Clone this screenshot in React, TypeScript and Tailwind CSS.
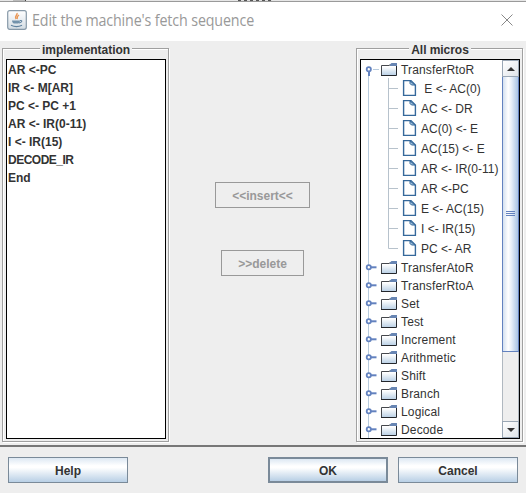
import React from "react";

const steps = ["AR <-PC", "IR <- M[AR]", "PC <- PC +1", "AR <- IR(0-11)", "I <- IR(15)", "DECODE_IR", "End"];
const transfers = [" E <- AC(0)", "AC <- DR", "AC(0) <- E", "AC(15) <- E", "AR <- IR(0-11)", "AR <-PC", "E <- AC(15)", "I <- IR(15)", "PC <- AR"];
const folders = ["TransferAtoR", "TransferRtoA", "Set", "Test", "Increment", "Arithmetic", "Shift", "Branch", "Logical", "Decode"];

function FolderGutter({ open = false }: { open?: boolean }) {
  return (
    <svg width="40" height="18" viewBox="0 0 40 18" className="shrink-0">
      <defs>
        <linearGradient id="folder" x1="0" y1="0" x2="0" y2="1">
          <stop offset="0.2" stopColor="#fff" />
          <stop offset="1" stopColor="#b8cfe5" />
        </linearGradient>
      </defs>
      {open ? (
        <>
          <path d="M7.5 15v3M12 9.5h6" stroke="#b8cbdd" />
          <path d="M8 11v5" stroke="#6382bf" strokeWidth="2" />
        </>
      ) : (
        <>
          <path d="M7.5 0v18" stroke="#b8cbdd" />
          <path d="M10 9.3h5.500" stroke="#6382bf" strokeWidth="2" />
        </>
      )}
      <circle cx="7.800" cy="9.3" r="2.100" fill="#fff" stroke="#6382bf" strokeWidth="1.800" />
      <path d="M20.5 5.500h7.500l2-1h5.500v11h-15z" fill="url(#folder)" />
      <path d="M20.500 15.500V5.500h7.500l1.500-1" fill="none" stroke="#45484d" />
      <path d="M28.500 5l2-2h5.500v2z" fill="#6785b3" />
      <path d="M29 5.500h7" stroke="#6785b3" />
      <path d="M20 15.500h15.500V6" stroke="#24272c" fill="none" />
    </svg>
  );
}

function FileGutter({ last }: { last: boolean }) {
  return (
    <svg width="60" height="20" viewBox="0 0 60 20" className="shrink-0">
      <path d="M7.5 0v20" stroke="#b8cbdd" />
      <path d={last ? "M27.5 0v10.500h9.500" : "M27.500 0v20M27.500 10.500h9.500"} stroke="#b7c2cc" fill="none" />
      <path d="M42.600 2.600h7.400l4.400 4.400v10.400h-11.800z" fill="#fff" stroke="#35689b" strokeWidth="1.400" />
      <path d="M49 3v2.500l1.500 1.500h3.500z" fill="#9bbcd8" stroke="#35689b" strokeWidth="1" />
    </svg>
  );
}

function Group({ title, children }: { title: string; children: React.ReactNode }) {
  return (
    <fieldset className="h-[401px] w-[167px] min-w-0 shrink-0 border border-[#a0a0a0] pt-1 pr-[2px] pl-[3px] shadow-[1px_1px_0_#fff,inset_1px_1px_0_#fff]">
      <legend className="mx-auto h-[14px] bg-[#eee] px-[2px] text-[12px] leading-[18px] font-bold tracking-[-0.05px]">{title}</legend>
      <div className="h-[380px] w-[160px] overflow-hidden border border-black bg-white">{children}</div>
    </fieldset>
  );
}

function Arrow({ down = false }: { down?: boolean }) {
  return (
    <div className="flex h-[17px] items-center justify-center border border-[#9aa7b5] bg-gradient-to-br from-white to-[#dfe4e9]">
      <svg width="8" height="4" viewBox="0 0 8 4"><path d={down ? "M0 0h8L4 4z" : "M0 4h8L4 0z"} fill="#333" /></svg>
    </div>
  );
}

const metal = "h-[26px] w-[120px] pt-[2px] bg-[linear-gradient(#dde8f3_0%,#fff_32%,#fff_40%,#b8cfe5_100%)] text-[12px] font-bold border-[#7a8a99]";
const disabled = "h-[26px] border border-[#999] pt-[2px] text-[12px] font-bold text-[#999]";

export default function App() {
  return (
    <div className="h-[493px] w-[526px] overflow-hidden bg-[#eee] font-['Liberation_Sans',Arial,sans-serif] text-[#333]">
      <div className="flex h-[2px] justify-between border-b border-[#9a9a9a] bg-[#e6e6e6] pr-[254px] pl-[13px]">
        <span className="h-px w-[13px] border-r border-[#444] bg-[#bbb]" />
        <span className="h-px w-[34px] bg-[repeating-linear-gradient(90deg,#555_0_3px,#ddd_3px_6px)]" />
      </div>
      <header className="flex h-[39px] items-center bg-white pb-[3px] pl-[7px]">
        <svg width="20" height="20" viewBox="0 0 20 20" className="shrink-0">
          <defs><linearGradient id="java" x1="0" y1="0" x2="0" y2="1"><stop stopColor="#fff" /><stop offset="1" stopColor="#d3dce3" /></linearGradient></defs>
          <rect x="0.700" y="0.700" width="18.600" height="18.600" rx="2" fill="url(#java)" stroke="#8799a8" strokeWidth="1.200" />
          <path d="M10 3c1 2-3 3-1 6M12 5c-3 2-1 2-2 4" fill="none" stroke="#e99655" strokeWidth="1.400" />
          <path d="M5 10.500h8c0 1.500-1 3-2 3H7c-1 0-2-1.500-2-3z" fill="#7292ab" />
          <path d="M13 10.500c3-.5 2 2-1 2.500M4 15.300c3 1.400 8 1.400 11 0" fill="none" stroke="#5f829f" strokeWidth="1.100" />
        </svg>
        <h1 className="ml-[5px] w-[440px] origin-left scale-x-[0.892] text-[16px] leading-5 font-normal tracking-[-0.15px] whitespace-nowrap text-[#999] font-['Open_Sans','Noto_Sans',sans-serif]">Edit the machine's fetch sequence</h1>
        <svg width="12" height="12" viewBox="0 0 12 12" className="ml-[29px]"><path d="M0.500 0.500l11 11M11.500 0.500l-11 11" stroke="#888" /></svg>
      </header>
      <main className="flex h-[404px] pl-[2px]">
        <Group title="implementation">
          <ul className="pl-px text-[12px] font-bold">
            {steps.map((s) => <li key={s} className={s === "DECODE_IR" ? "h-[18px] leading-[20px] tracking-[-0.5px]" : "h-[18px] leading-[20px]"}>{s}</li>)}
          </ul>
        </Group>
        <div className="flex w-[187px] flex-col items-center gap-[42px] pt-[141px]">
          <button className={disabled + " w-[95px]"}>&lt;&lt;insert&lt;&lt;</button>
          <button className={disabled + " w-[83px]"}>&gt;&gt;delete</button>
        </div>
        <Group title="All micros">
          <div className="flex h-full">
            <div className="w-[141px] shrink-0 overflow-hidden text-[12px] whitespace-pre">
              <div className="flex h-[18px] leading-[20px]"><FolderGutter open /><span className="tracking-[0.15px]">TransferRtoR</span></div>
              {transfers.map((t, i) => (
                <div key={t} className="flex h-5 leading-[22px]"><FileGutter last={i === transfers.length - 1} /><span>{t}</span></div>
              ))}
              {folders.map((f) => (
                <div key={f} className="flex h-[18px] leading-[20px]"><FolderGutter /><span className="tracking-[0.15px]">{f}</span></div>
              ))}
            </div>
            <div className="flex w-[17px] shrink-0 flex-col bg-[#eee]">
              <Arrow />
              <div className="flex h-[275px] flex-col items-center border border-t-0 border-[#6382bf] bg-[linear-gradient(90deg,#d3e0f0,#fff_35%,#e8f0f9_55%,#a9c4e4)] pt-[134px]">
                <i className="mb-px h-px w-[9px] bg-[#6382bf]" />
                <i className="mb-px h-px w-[9px] bg-[#6382bf]" />
                <i className="h-px w-[9px] bg-[#6382bf]" />
              </div>
              <div className="flex-1 border-x border-[#b0b8c0]" />
              <Arrow down />
            </div>
          </div>
        </Group>
      </main>
      <footer className="flex h-[48px] border-t-2 border-[#777] pt-[10px] pl-2">
        <button className={metal + " border"}>Help</button>
        <button className={metal + " ml-[140px] border-2"}>OK</button>
        <button className={metal + " ml-[10px] border"}>Cancel</button>
      </footer>
    </div>
  );
}
